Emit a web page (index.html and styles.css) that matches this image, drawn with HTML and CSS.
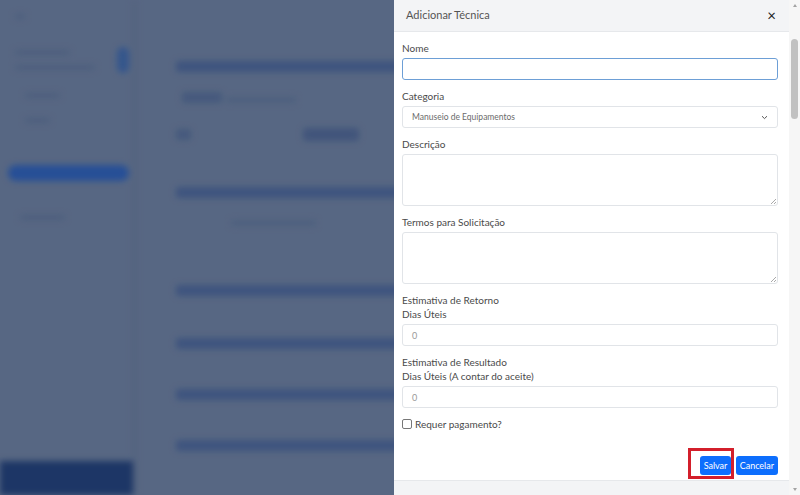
FILE: index.html
```html
<!DOCTYPE html>
<html lang="pt-BR">
<head>
    <meta charset="UTF-8">
    <meta name="viewport" content="width=device-width, initial-scale=1.0">
    <title>Adicionar Técnica</title>
    <link rel="stylesheet" href="styles.css">
</head>
<body>
    <div class="screen">
        <!-- Página por trás do modal (desfocada) -->
        <div class="backdrop">
            <div class="page">
                <aside class="sidebar">
                    <div class="sb-line w10 mt14"></div>
                    <div class="sb-row">
                        <div class="sb-col">
                            <div class="sb-line w55"></div>
                            <div class="sb-line w80"></div>
                        </div>
                        <div class="sb-toggle"></div>
                    </div>
                    <div class="sb-line w35 ml10 mt20"></div>
                    <div class="sb-line w25 ml10 mt20"></div>
                    <div class="sb-button"></div>
                    <div class="sb-line w45 ml5 mt34"></div>
                    <div class="sb-bottom"></div>
                </aside>
                <main class="content">
                    <div class="bar"></div>
                    <div class="line-row mt18">
                        <div class="txt tall w40"></div>
                        <div class="txt w70 lite"></div>
                    </div>
                    <div class="line-row mt25 between">
                        <div class="txt tall w15"></div>
                        <div class="chip"></div>
                    </div>
                    <div class="bar mt46"></div>
                    <div class="txt w85 lite mt22 ml55"></div>
                    <div class="bar mt59"></div>
                    <div class="bar mt42"></div>
                    <div class="bar mt40"></div>
                    <div class="bar mt40"></div>
                </main>
            </div>
            <div class="overlay"></div>
        </div>

        <!-- Painel lateral -->
        <div class="drawer">
            <div class="drawer-main">
                <div class="drawer-header">
                    <h5 class="drawer-title">Adicionar Técnica</h5>
                    <span class="close">&times;</span>
                </div>

                <form class="drawer-body">
                    <div class="field">
                        <label for="nome">Nome</label>
                        <input type="text" id="nome" class="form-control focused">
                    </div>

                    <div class="field">
                        <label for="categoria">Categoria</label>
                        <div class="form-control select">
                            <span>Manuseio de Equipamentos</span>
                            <svg width="7" height="5" viewBox="0 0 7 5"><path d="M1 1.2 L3.5 3.6 L6 1.2" fill="none" stroke="#555" stroke-width="1"/></svg>
                        </div>
                    </div>

                    <div class="field">
                        <label for="descricao">Descrição</label>
                        <div class="form-control textarea"><span class="grip"></span></div>
                    </div>

                    <div class="field">
                        <label for="termos">Termos para Solicitação</label>
                        <div class="form-control textarea"><span class="grip"></span></div>
                    </div>

                    <div class="field">
                        <label for="retorno">Estimativa de Retorno<br>Dias Úteis</label>
                        <div class="form-control number">0</div>
                    </div>

                    <div class="field">
                        <label for="resultado">Estimativa de Resultado<br>Dias Úteis (A contar do aceite)</label>
                        <div class="form-control number">0</div>
                    </div>

                    <div class="check-row">
                        <span class="checkbox"></span>
                        <span>Requer pagamento?</span>
                    </div>

                    <div class="actions">
                        <button type="button" class="btn highlighted">Salvar</button>
                        <button type="button" class="btn">Cancelar</button>
                    </div>
                </form>

                <div class="drawer-footer"></div>
            </div>

            <div class="scrollbar">
                <span class="arrow up"></span>
                <div class="track">
                    <div class="thumb"></div>
                </div>
                <span class="arrow down"></span>
            </div>
        </div>
    </div>
</body>
</html>
```

FILE: styles.css
```css
html, body {
    margin: 0;
    padding: 0;
    height: 100%;
    overflow: hidden;
}

body {
    font-family: Lato, "Liberation Sans", Arial, sans-serif;
    background-color: #5a6985;
}

.screen {
    display: flex;
    width: 800px;
    height: 495px;
}

/* ---------- Fundo desfocado ---------- */
.backdrop {
    position: relative;
    width: 394px;
    height: 495px;
    flex-shrink: 0;
    overflow: hidden;
    background-color: #5a6985;
}

.page {
    display: flex;
    height: 100%;
    filter: blur(3px);
}

.overlay {
    position: absolute;
    inset: 0;
    background-color: rgba(70, 84, 112, 0.08);
}

.sidebar {
    width: 133px;
    flex-shrink: 0;
    display: flex;
    flex-direction: column;
    border-right: 3px solid #54627f;
}

.sb-line {
    height: 5px;
    border-radius: 2px;
    background-color: #4e5e7f;
    margin-left: 15px;
}

.sb-row {
    display: flex;
    align-items: center;
    margin-top: 28px;
}

.sb-col {
    flex: 1;
    display: flex;
    flex-direction: column;
    gap: 10px;
}

.sb-toggle {
    width: 12px;
    height: 26px;
    border-radius: 6px;
    background-color: #34568f;
    margin-right: 4px;
}

.sb-button {
    height: 16px;
    border-radius: 8px;
    background-color: #254f9a;
    margin: 42px 4px 0 8px;
}

.sb-bottom {
    margin-top: auto;
    height: 34px;
    background-color: #1b3465;
}

.content {
    flex: 1;
    padding: 61px 0 0 40px;
    display: flex;
    flex-direction: column;
}

.bar {
    height: 11px;
    border-radius: 3px;
    background-color: #3f5480;
    width: 240px;
}

.line-row {
    display: flex;
    align-items: flex-end;
    gap: 4px;
    width: 183px;
    height: 13px;
    margin-left: 6px;
}

.line-row.between {
    justify-content: space-between;
    align-items: center;
    margin-left: 0;
}

.txt {
    height: 6px;
    border-radius: 2px;
    background-color: #475a7e;
}

.txt.tall {
    height: 11px;
}

.txt.lite {
    background-color: #4f6080;
}

.chip {
    width: 56px;
    height: 13px;
    border-radius: 3px;
    background-color: #42557c;
}

.w10 { width: 10px; }
.w15 { width: 15px; }
.w25 { width: 25px; }
.w35 { width: 35px; }
.w40 { width: 40px; }
.w45 { width: 45px; }
.w55 { width: 55px; }
.w70 { width: 70px; }
.w80 { width: 80px; }
.w85 { width: 85px; }
.ml5 { margin-left: 20px; }
.ml10 { margin-left: 25px; }
.ml55 { margin-left: 55px; }
.mt14 { margin-top: 14px; }
.mt18 { margin-top: 18px; }
.mt20 { margin-top: 20px; }
.mt22 { margin-top: 22px; }
.mt25 { margin-top: 25px; }
.mt34 { margin-top: 34px; }
.mt40 { margin-top: 40px; }
.mt42 { margin-top: 42px; }
.mt46 { margin-top: 46px; }
.mt59 { margin-top: 59px; }

/* ---------- Painel ---------- */
.drawer {
    width: 406px;
    height: 495px;
    display: flex;
    background-color: #fff;
    box-shadow: -2px 0 6px rgba(0, 0, 0, 0.15);
}

.drawer-main {
    flex: 1;
    display: flex;
    flex-direction: column;
    min-width: 0;
}

.drawer-header {
    height: 32px;
    display: flex;
    align-items: center;
    justify-content: space-between;
    padding: 0 13px 0 12px;
    background-color: #f3f4f6;
    border-bottom: 1px solid #e6e8eb;
    box-sizing: border-box;
}

.drawer-title {
    margin: 0 0 2px 0;
    font-size: 11px;
    font-weight: normal;
    color: #555;
}

.close {
    font-size: 15px;
    line-height: 1;
    color: #222;
}

.drawer-body {
    flex: 1;
    padding: 9px 11px 0 8px;
    display: flex;
    flex-direction: column;
}

.field {
    display: flex;
    flex-direction: column;
    margin-bottom: 9px;
}

.field label {
    font-size: 10px;
    line-height: 14px;
    color: #4a4a4a;
    margin-bottom: 3px;
}

.form-control {
    box-sizing: border-box;
    width: 100%;
    height: 22px;
    margin: 0;
    border: 1px solid #e1e4e8;
    border-radius: 3px;
    background-color: #fff;
    font-family: inherit;
    font-size: 9px;
    color: #777;
    display: flex;
    align-items: center;
    padding: 0 9px;
}

.form-control.focused {
    border-color: #6d9fd6;
    outline: none;
}

.select {
    justify-content: space-between;
    color: #6b6b6b;
    font-size: 8.5px;
}

.textarea {
    position: relative;
    height: 52px;
}

.grip {
    position: absolute;
    right: 1px;
    bottom: 1px;
    width: 5px;
    height: 5px;
    background: linear-gradient(135deg, transparent 45%, #aaa 45%, #aaa 55%, transparent 55%, transparent 75%, #aaa 75%, #aaa 85%, transparent 85%);
}

.number {
    color: #999;
}

.check-row {
    display: flex;
    align-items: center;
    gap: 3px;
    height: 14px;
    font-size: 10px;
    color: #4a4a4a;
}

.checkbox {
    width: 8px;
    height: 8px;
    border: 1px solid #777;
    border-radius: 2px;
    background-color: #fff;
}

.actions {
    display: flex;
    justify-content: flex-end;
    gap: 5px;
    margin-top: 25px;
}

.btn {
    height: 19px;
    padding: 0 4px;
    border: none;
    border-radius: 3px;
    background-color: #0d6efd;
    color: #fff;
    font-family: inherit;
    font-size: 9px;
}

.btn.highlighted {
    position: relative;
    width: 31px;
}

.btn.highlighted::after {
    content: "";
    position: absolute;
    left: -12px;
    right: -3px;
    top: -8px;
    bottom: -4px;
    border: 3px solid #d31f2b;
}

.drawer-footer {
    height: 14px;
    background-color: #f3f4f6;
    border-top: 1px solid #e6e8eb;
}

/* ---------- Barra de rolagem ---------- */
.scrollbar {
    width: 11px;
    display: flex;
    flex-direction: column;
    align-items: center;
    background-color: #f6f6f6;
}

.arrow {
    width: 0;
    height: 0;
    border-left: 2.5px solid transparent;
    border-right: 2.5px solid transparent;
    margin: 4px 0;
}

.arrow.up {
    border-bottom: 3px solid #a3a3a3;
}

.arrow.down {
    border-top: 3px solid #a3a3a3;
}

.track {
    flex: 1;
    width: 100%;
    display: flex;
    justify-content: center;
    padding-top: 28px;
}

.thumb {
    width: 7px;
    height: 80px;
    border-radius: 4px;
    background-color: #c1c1c1;
}
```
